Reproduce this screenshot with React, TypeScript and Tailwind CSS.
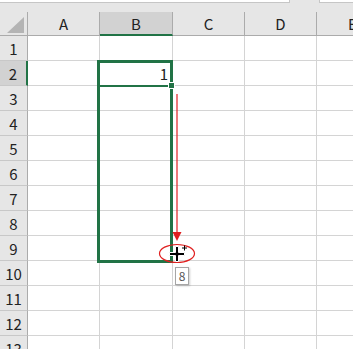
import React from "react";

const cols = [
  { label: "A", w: "w-[72px]" },
  { label: "B", w: "w-[73px]" },
  { label: "C", w: "w-[72px]" },
  { label: "D", w: "w-[72px]" },
  { label: "E", w: "w-[72px]" },
];

const rows = [1, 2, 3, 4, 5, 6, 7, 8, 9, 10, 11, 12, 13];

export default function App() {
  return (
    <div
      className="relative w-[353px] h-[349px] overflow-hidden bg-white text-[#222]"
      style={{ fontFamily: '"Noto Sans CJK JP", "Liberation Sans", sans-serif' }}
    >
      {/* formula bar edge */}
      <div className="flex h-[12px] bg-[#e6e6e6]">
        <div className="w-[290px] h-[3px] bg-white border-b border-r border-[#c6c6c6]" />
        <div className="w-[29px]" />
        <div className="flex-1 h-[3px] bg-white border-b border-l border-[#c6c6c6]" />
      </div>

      {/* column headers */}
      <div className="flex h-[24px] w-[400px] bg-[#e6e6e6]">
        <div className="relative shrink-0 w-[28px] border-r border-b border-[#ababab]">
          <svg className="absolute left-0 top-0" width="28" height="24" viewBox="0 0 28 24">
            <polygon points="7,21 24,21 24,5" fill="#b4b4b4" />
          </svg>
        </div>
        {cols.map((c) => (
          <div
            key={c.label}
            className={`${c.w} shrink-0 flex items-center justify-center text-[15px] leading-none border-r border-[#ababab] ${
              c.label === "B"
                ? "bg-[#d2d2d2] border-b-2 border-b-[#217346]"
                : "border-b border-b-[#ababab]"
            }`}
          >
            {c.label}
          </div>
        ))}
      </div>

      {/* rows */}
      {rows.map((r) => (
        <div key={r} className="flex h-[25px] w-[400px]">
          <div
            className={`w-[28px] shrink-0 flex items-center justify-center text-[15px] leading-none border-b border-[#c8c8c8] ${
              r === 2
                ? "bg-[#d2d2d2] border-r-2 border-r-[#217346]"
                : "bg-[#e6e6e6] border-r border-r-[#ababab]"
            }`}
          >
            {r}
          </div>
          {cols.map((c) => (
            <div
              key={c.label}
              className={`${c.w} shrink-0 flex items-center justify-end pr-[4px] text-[15px] leading-none border-r border-b border-[#d4d4d4]`}
            >
              {r === 2 && c.label === "B" ? "1" : ""}
            </div>
          ))}
        </div>
      ))}

      {/* selection range B2:B9 */}
      <div className="absolute left-[97px] top-[60px] w-[76px] h-[203px] border-[3px] border-[#217346]" />
      <div className="absolute left-[97px] top-[85px] w-[74px] h-[2px] bg-[#217346]" />
      <div className="absolute left-[168px] top-[82px] w-[7px] h-[7px] bg-[#217346] border border-white" />

      {/* fill drag tooltip */}
      <div className="absolute left-[175px] top-[267px] w-[14px] h-[18px] bg-white border border-[#a6a6a6] shadow-[1px_1px_2px_rgba(0,0,0,0.2)] flex items-center justify-center text-[12px] leading-none text-[#555]">
        8
      </div>

      {/* annotation + cursor */}
      <svg className="absolute left-0 top-0 pointer-events-none" width="353" height="349" viewBox="0 0 353 349">
        <line x1="177" y1="94" x2="177" y2="234" stroke="#e02020" strokeWidth="1.2" />
        <polygon points="172.5,232 181.5,232 177,241" fill="#e02020" />
        <ellipse cx="177" cy="253.5" rx="17.5" ry="9" fill="none" stroke="#e02020" strokeWidth="1.2" />
        <path d="M175.5,246.5h3v6h6v3h-6v6h-3v-6h-6v-3h6z" fill="#000" stroke="#fff" strokeWidth="1" />
        <path d="M184,245.5h1v2h2v1h-2v2h-1v-2h-2v-1h2z" fill="#000" />
      </svg>
    </div>
  );
}
